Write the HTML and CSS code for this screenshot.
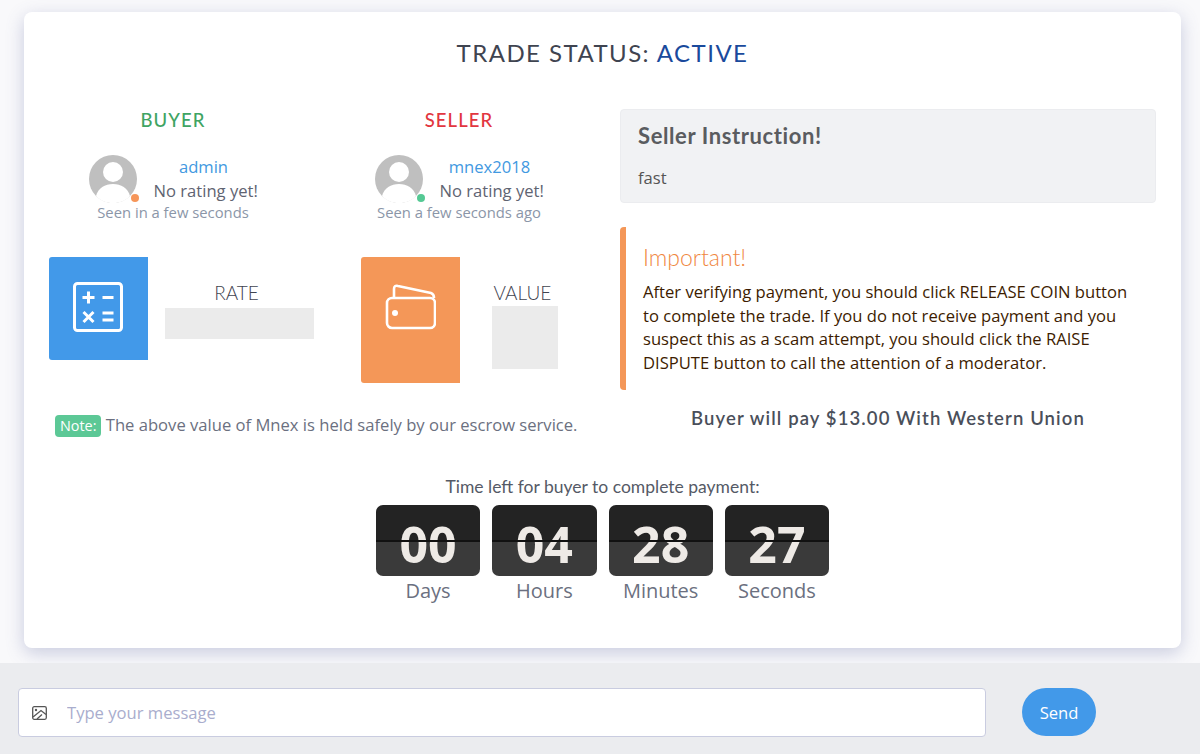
FILE: index.html
```html
<!DOCTYPE html>
<html lang="en">
<head>
  <meta charset="UTF-8" />
  <meta name="viewport" content="width=device-width, initial-scale=1" />
  <title>Trade Status</title>
  <link rel="stylesheet" href="styles.css">
</head>
<body>

  <main class="card">
    <h1 class="trade-title">TRADE STATUS: <span class="status-active">ACTIVE</span></h1>

    <div class="trade-body">
      <section class="col-left">
        <div class="users">
          <div class="user">
            <h2 class="role role-buyer">BUYER</h2>
            <div class="user-row">
              <div class="avatar">
                <svg viewBox="0 0 48 48" width="48" height="48">
                  <circle cx="24" cy="24" r="24" fill="#bfbfbf"/>
                  <circle cx="24" cy="17" r="10" fill="#fff"/>
                  <path d="M7 41 C9 33 16 29 24 29 C32 29 39 33 41 41 C37 45.500 31 48 24 48 C17 48 11 45.500 7 41 Z" fill="#fff"/>
                </svg>
                <span class="dot dot-away"></span>
              </div>
              <div class="user-info">
                <a class="user-name">admin</a>
                <div class="user-rating">No rating yet!</div>
              </div>
            </div>
            <div class="user-seen">Seen in a few seconds</div>
          </div>

          <div class="user">
            <h2 class="role role-seller">SELLER</h2>
            <div class="user-row">
              <div class="avatar">
                <svg viewBox="0 0 48 48" width="48" height="48">
                  <circle cx="24" cy="24" r="24" fill="#bfbfbf"/>
                  <circle cx="24" cy="17" r="10" fill="#fff"/>
                  <path d="M7 41 C9 33 16 29 24 29 C32 29 39 33 41 41 C37 45.500 31 48 24 48 C17 48 11 45.500 7 41 Z" fill="#fff"/>
                </svg>
                <span class="dot dot-online"></span>
              </div>
              <div class="user-info">
                <a class="user-name">mnex2018</a>
                <div class="user-rating">No rating yet!</div>
              </div>
            </div>
            <div class="user-seen">Seen a few seconds ago</div>
          </div>
        </div>

        <div class="stats">
          <div class="stat">
            <div class="stat-icon stat-icon-rate">
              <svg viewBox="0 0 50 50" width="50" height="50" fill="none" stroke="#fff" stroke-width="3">
                <rect x="1.500" y="1.500" width="47" height="47" rx="3"/>
                <path d="M9.500 15.500 H21.500 M15.500 9.500 V21.500 M29.500 15.500 H40.500 M10.500 30 L20.500 40 M20.500 30 L10.500 40 M29.500 31 H40.500 M29.500 38 H40.500"/>
              </svg>
            </div>
            <div class="stat-body stat-body-rate">
              <div class="stat-label">RATE</div>
              <div class="stat-value stat-value-rate"></div>
            </div>
          </div>

          <div class="stat">
            <div class="stat-icon stat-icon-value">
              <svg viewBox="0 0 51 46" width="51" height="46" fill="none" stroke="#fff" stroke-width="2.600">
                <rect x="2" y="14" width="48" height="30" rx="5"/>
                <path d="M9 14 V5 Q9 1 13 2 L46 9 Q49 10 49 14"/>
                <circle cx="10" cy="29" r="3" fill="#fff" stroke="none"/>
              </svg>
            </div>
            <div class="stat-body stat-body-value">
              <div class="stat-label">VALUE</div>
              <div class="stat-value stat-value-value"></div>
            </div>
          </div>
        </div>

        <p class="note"><span class="note-badge">Note:</span> The above value of Mnex is held safely by our escrow service.</p>
      </section>

      <section class="col-right">
        <div class="instruction">
          <h3>Seller Instruction!</h3>
          <p>fast</p>
        </div>

        <div class="important">
          <h4>Important!</h4>
          <p>After verifying payment, you should click RELEASE COIN button to complete the trade. If you do not receive payment and you suspect this as a scam attempt, you should click the RAISE DISPUTE button to call the attention of a moderator.</p>
        </div>

        <div class="pay-line">Buyer will pay $13.00 With Western Union</div>
      </section>
    </div>

    <div class="countdown">
      <div class="countdown-title">Time left for buyer to complete payment:</div>
      <div class="countdown-row">
        <div class="count-item"><div class="count-box">00</div><div class="count-label">Days</div></div>
        <div class="count-item"><div class="count-box">04</div><div class="count-label">Hours</div></div>
        <div class="count-item"><div class="count-box">28</div><div class="count-label">Minutes</div></div>
        <div class="count-item"><div class="count-box">27</div><div class="count-label">Seconds</div></div>
      </div>
    </div>
  </main>

  <footer class="chat-bar">
    <div class="chat-input">
      <svg class="chat-icon" viewBox="0 0 15 14" width="15" height="14" fill="none" stroke="#555" stroke-width="1.300">
        <rect x="0.700" y="0.700" width="13.600" height="12.600" rx="1.500"/>
        <circle cx="4" cy="4" r="1.200" fill="#555" stroke="none"/>
        <path d="M1 11 L9 4.500 L14 8.500 M5 13 L10 8.500"/>
      </svg>
      <input type="text" placeholder="Type your message">
    </div>
    <button class="send-btn">Send</button>
  </footer>

</body>
</html>
```

FILE: styles.css
```css
* {
  box-sizing: border-box;
}
body {
  margin: 0;
  height: 754px;
  overflow: hidden;
  background: #f9f9fb;
  font-family: 'Open Sans', sans-serif;
  font-size: 16.600px;
  color: #6b7080;
}
h1, h2, h3, h4, p {
  margin: 0;
  font-weight: normal;
}

.card {
  width: 1157px;
  height: 636px;
  margin: 12px 0 0 24px;
  padding: 0 25px;
  background: #fff;
  border-radius: 8px;
  box-shadow: 0 5px 18px rgba(90, 100, 160, 0.3);
}
.trade-title {
  padding-top: 25px;
  text-align: center;
  font-family: 'Lato', sans-serif;
  font-size: 24px;
  line-height: 32px;
  letter-spacing: 1.450px;
  color: #3f4450;
}
.status-active {
  color: #1a4a9c;
}

.trade-body {
  display: grid;
  grid-template-columns: 546px 536px;
  column-gap: 25px;
  margin-top: 40px;
}

/* users */
.users {
  display: flex;
  gap: 86px;
  padding-left: 24px;
}
.user {
  width: 200px;
  text-align: center;
}
.role {
  margin-top: -1px;
  font-family: 'Lato', sans-serif;
  font-size: 18.500px;
  font-weight: 500;
  line-height: 24px;
  letter-spacing: 1.100px;
}
.role-buyer {
  color: #3fa463;
}
.role-seller {
  color: #e2363f;
}
.user-row {
  display: flex;
  justify-content: center;
  gap: 17px;
  margin-top: 23px;
}
.avatar {
  position: relative;
  width: 48px;
  height: 48px;
}
.avatar svg {
  display: block;
}
.dot {
  position: absolute;
  right: -2px;
  bottom: 1px;
  width: 8px;
  height: 8px;
  border-radius: 50%;
}
.dot-away {
  background: #f6965a;
}
.dot-online {
  background: #55c994;
}
.user-info {
  width: 104px;
  white-space: nowrap;
  text-align: center;
}
.user-name {
  display: block;
  padding-right: 4px;
  line-height: 24px;
  color: #4299e1;
}
.user-rating {
  line-height: 24px;
  color: #5f6472;
}
.user-seen {
  margin-top: -1px;
  font-size: 14.800px;
  line-height: 20px;
  color: #8b96a8;
}

/* rate and value */
.stats {
  display: flex;
  align-items: flex-start;
  gap: 47px;
  margin-top: 35px;
}
.stat {
  display: flex;
  gap: 17px;
}
.stat + .stat {
  gap: 32px;
}
.stat-icon {
  width: 99px;
  display: flex;
  justify-content: center;
  align-items: flex-start;
  border-radius: 3px 0 0 3px;
}
.stat-icon svg {
  display: block;
}
.stat-icon-rate {
  height: 103px;
  padding: 25px 1px 0 0;
  background: #4299e9;
}
.stat-icon-value {
  height: 126px;
  padding-top: 27px;
  background: #f49758;
}
.stat-body {
  padding-top: 24px;
}
.stat-label {
  font-family: 'Lato', sans-serif;
  font-size: 19px;
  font-weight: 300;
  line-height: 24px;
  color: #3f4450;
  text-align: center;
}
.stat-body-rate .stat-label {
  padding-right: 6px;
}
.stat-body-value .stat-label {
  padding-right: 5px;
}
.stat-value {
  background: #ebebeb;
}
.stat-value-rate {
  width: 149px;
  height: 31px;
  margin-top: 3px;
}
.stat-value-value {
  width: 66px;
  height: 63px;
  margin-top: 1px;
}

.note {
  margin-top: 30px;
  padding-left: 6px;
  line-height: 24px;
  color: #6b7080;
  white-space: nowrap;
}
.note-badge {
  display: inline-block;
  padding: 0 5px;
  background: #5cc896;
  border-radius: 4px;
  color: #fff;
  font-size: 14.400px;
  line-height: 22px;
}

/* right column */
.instruction {
  height: 94px;
  padding: 13px 17px;
  background: #f1f2f4;
  border: 1px solid #ebecef;
  border-radius: 4px;
  color: #555;
}
.instruction h3 {
  font-family: 'Lato', sans-serif;
  font-size: 22px;
  line-height: 26px;
  font-weight: 700;
  letter-spacing: 0.600px;
  color: #5a5c60;
}
.instruction p {
  margin-top: 17px;
  line-height: 24px;
}
.important {
  height: 163px;
  margin-top: 24px;
  padding: 15px 16px 0 17px;
  border-left: 6px solid #f49758;
  border-radius: 4px;
}
.important h4 {
  font-family: 'Lato', sans-serif;
  font-size: 23px;
  font-weight: 300;
  line-height: 30px;
  color: #f0873f;
}
.important p {
  margin-top: 8px;
  line-height: 23.700px;
  color: #3d1c00;
}
.pay-line {
  margin-top: 16px;
  text-align: center;
  font-family: 'Lato', sans-serif;
  font-size: 18.500px;
  line-height: 24px;
  font-weight: 600;
  letter-spacing: 1.100px;
  color: #4a4f5a;
}

/* countdown */
.countdown {
  margin-top: 38px;
  text-align: center;
}
.countdown-title {
  font-family: 'Lato', sans-serif;
  font-size: 17.500px;
  line-height: 24px;
  color: #555a66;
}
.countdown-row {
  display: flex;
  justify-content: center;
  gap: 12px;
  margin-top: 6px;
}
.count-item {
  width: 104.300px;
}
.count-box {
  position: relative;
  height: 71px;
  background: linear-gradient(#232323 0, #232323 36px, #3a3a3a 36px, #3a3a3a 100%);
  border-radius: 7px;
  color: #eeeae6;
  font-size: 50px;
  font-weight: 700;
  line-height: 78px;
}
.count-box::after {
  content: "";
  position: absolute;
  left: 0;
  right: 0;
  top: 35px;
  height: 1.500px;
  background: #111;
}
.count-label {
  margin-top: 2px;
  font-size: 20px;
  line-height: 26px;
  color: #6b7080;
}

/* chat */
.chat-bar {
  display: flex;
  gap: 36px;
  height: 91px;
  margin-top: 15px;
  padding: 25px 18px 0;
  background: #ebecef;
}
.chat-input {
  display: flex;
  align-items: center;
  width: 968px;
  height: 49px;
  padding-left: 13px;
  background: #fff;
  border: 1px solid #c9cce0;
  border-radius: 4px;
}
.chat-icon {
  flex: none;
}
.chat-input input {
  flex: 1;
  margin-left: 18px;
  border: none;
  outline: none;
  background: transparent;
  font-family: 'Open Sans', sans-serif;
  font-size: 16.600px;
}
.chat-input input::placeholder {
  color: #a9adcd;
}
.send-btn {
  width: 74px;
  height: 48px;
  background: #4299e9;
  border: none;
  border-radius: 24px;
  color: #fff;
  font-family: 'Open Sans', sans-serif;
  font-size: 16.600px;
  cursor: pointer;
}
```
